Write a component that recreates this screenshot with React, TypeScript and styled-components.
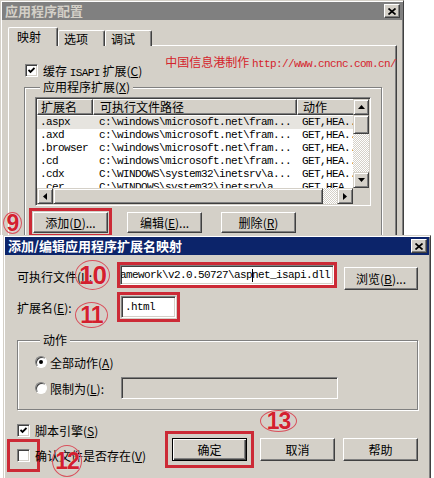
import React from "react";
import styled, { createGlobalStyle, css } from "styled-components";

const FACE = "#d4d0c8";
const SHADOW = "#808080";
const DARK = "#404040";
const MARK = "#cc2a36";

const GlobalStyle = createGlobalStyle`
  html, body { margin: 0; padding: 0; background: #fff; }
  body {
    font-family: "Noto Sans CJK SC", sans-serif;
    font-size: 12px;
    color: #000;
  }
  * { box-sizing: border-box; }
`;

const markCss = css<{ $mark?: number }>`
  ${({ $mark }) =>
    $mark !== undefined &&
    css`
      outline: 3px solid ${MARK};
      outline-offset: ${$mark}px;
    `}
`;

const Screen = styled.div`
  position: relative;
  width: 434px;
  height: 478px;
  overflow: hidden;
  background: #fff;
`;

const Window = styled.div<{ $width: number; $height: number; $left?: number }>`
  width: ${({ $width }) => $width}px;
  height: ${({ $height }) => $height}px;
  margin-left: ${({ $left }) => $left ?? 0}px;
  display: flex;
  flex-direction: column;
  padding: 1px 1px 0 1px;
  overflow: hidden;
  background: ${FACE};
  border: 1px solid;
  border-bottom: none;
  border-color: ${FACE} ${DARK} ${DARK} ${FACE};
  box-shadow: inset 1px 1px 0 #fff, inset -1px 0 0 ${SHADOW};
`;

const TitleBar = styled.div<{ $active?: boolean }>`
  flex: none;
  height: 18px;
  display: flex;
  align-items: center;
  justify-content: space-between;
  padding: 0 2px 0 3px;
  background: ${({ $active }) => ($active ? "#0c246a" : SHADOW)};
  color: ${({ $active }) => ($active ? "#fff" : FACE)};
  font-size: 13px;
  font-weight: bold;
  line-height: 18px;
  white-space: nowrap;
`;

const CloseButton = styled.div`
  width: 16px;
  height: 14px;
  display: flex;
  align-items: center;
  justify-content: center;
  background: ${FACE};
  border: 1px solid;
  border-color: #fff ${DARK} ${DARK} #fff;
  box-shadow: inset -1px -1px 0 ${SHADOW};
`;

const TabBody = styled.div`
  display: flex;
  flex-direction: column;
  padding: 7px 5px 0 6px;
`;

const TabRow = styled.div`
  display: flex;
  align-items: flex-end;
  height: 19px;
  margin-bottom: -1px;
  position: relative;
  z-index: 1;
`;

const Tab = styled.div<{ $active?: boolean; $width: number }>`
  width: ${({ $width }) => $width}px;
  height: ${({ $active }) => ($active ? 19 : 16)}px;
  padding-left: ${({ $active }) => ($active ? 8 : 5)}px;
  line-height: ${({ $active }) => ($active ? 18 : 15)}px;
  font-size: 12px;
  background: ${FACE};
  border: 1px solid;
  border-bottom: none;
  border-color: #fff ${DARK} ${DARK} #fff;
  border-radius: 2px 2px 0 0;
  box-shadow: inset -1px 0 0 ${SHADOW};
`;

const TabPanel = styled.div`
  border: 1px solid;
  border-color: #fff ${DARK} ${DARK} #fff;
  box-shadow: inset -1px -1px 0 ${SHADOW};
  padding: 17px 14px 20px 15px;
`;

const CheckRow = styled.div<{ $indent?: number }>`
  display: flex;
  align-items: center;
  gap: 5px;
  height: 14px;
  margin-left: ${({ $indent }) => $indent ?? 0}px;
  white-space: nowrap;
`;

const Watermark = styled.div`
  margin-left: auto;
  margin-right: -14px;
  align-self: flex-start;
  margin-top: -10px;
  color: #d4232b;
  white-space: nowrap;
`;

const Mono = styled.span`
  font-family: "Liberation Mono", "DejaVu Sans Mono", monospace;
  font-size: 11px;
  letter-spacing: -0.6px;
`;

const Key = styled.span`
  text-decoration: underline;
`;

const CheckBox = styled.span<{ $mark?: number }>`
  flex: none;
  width: 13px;
  height: 13px;
  display: flex;
  align-items: center;
  justify-content: center;
  background: #fff;
  border: 1px solid;
  border-color: ${SHADOW} #fff #fff ${SHADOW};
  box-shadow: inset 1px 1px 0 ${DARK}, inset -1px -1px 0 ${FACE};
  ${markCss}
`;

const Radio = styled.span<{ $checked?: boolean }>`
  flex: none;
  width: 12px;
  height: 12px;
  display: flex;
  align-items: center;
  justify-content: center;
  border-radius: 50%;
  background: #fff;
  border: 1px solid;
  border-color: ${SHADOW} #fff #fff ${SHADOW};
  box-shadow: inset 1px 1px 0 ${DARK};
  &::after {
    content: "";
    width: 4px;
    height: 4px;
    border-radius: 50%;
    background: ${({ $checked }) => ($checked ? "#000" : "transparent")};
  }
`;

const GroupBox = styled.fieldset<{ $pad: string }>`
  margin: 0;
  min-width: 0;
  border: 1px solid ${SHADOW};
  box-shadow: inset 1px 1px 0 #fff, 1px 1px 0 #fff;
  padding: ${({ $pad }) => $pad};
`;

const Legend = styled.legend`
  margin-left: 5px;
  padding: 0 3px;
  line-height: 14px;
  background: ${FACE};
`;

const ListView = styled.div`
  height: 109px;
  display: grid;
  grid-template-columns: minmax(0, 1fr) 16px;
  grid-template-rows: minmax(0, 1fr) 16px;
  padding: 1px;
  background: #fff;
  border: 1px solid;
  border-color: ${SHADOW} #fff #fff ${SHADOW};
  box-shadow: inset 1px 1px 0 ${DARK}, inset -1px -1px 0 ${FACE};
`;

const ListBody = styled.div`
  overflow: hidden;
  background: #fff;
`;

const COLS = "56px 204px 58px";

const ListHeader = styled.div`
  display: grid;
  grid-template-columns: ${COLS};
  height: 16px;
`;

const HeaderCell = styled.div<{ $pad: number }>`
  padding-left: ${({ $pad }) => $pad}px;
  line-height: 14px;
  white-space: nowrap;
  overflow: hidden;
  background: ${FACE};
  border: 1px solid;
  border-color: #fff ${DARK} ${DARK} #fff;
  box-shadow: inset -1px -1px 0 ${SHADOW};
`;

const ListRows = styled.div`
  padding-top: 1px;
`;

const ListRow = styled.div<{ $selected?: boolean }>`
  display: grid;
  grid-template-columns: ${COLS};
  height: 13px;
  background: ${({ $selected }) => ($selected ? "#e6e4df" : "#fff")};
`;

const Cell = styled(Mono)<{ $pad: number }>`
  padding-left: ${({ $pad }) => $pad}px;
  line-height: 13px;
  white-space: nowrap;
  overflow: hidden;
`;

const checker = css`
  background-color: #fff;
  background-image: repeating-conic-gradient(${FACE} 0 25%, #fff 0 50%);
  background-size: 2px 2px;
`;

const ScrollBar = styled.div<{ $vertical?: boolean }>`
  display: flex;
  flex-direction: ${({ $vertical }) => ($vertical ? "column" : "row")};
  ${checker}
`;

const ScrollTrack = styled.div`
  flex: 1;
`;

const RaisedBox = styled.div<{ $w: number; $h: number }>`
  flex: none;
  width: ${({ $w }) => $w}px;
  height: ${({ $h }) => $h}px;
  display: flex;
  align-items: center;
  justify-content: center;
  background: ${FACE};
  border: 1px solid;
  border-color: ${FACE} ${DARK} ${DARK} ${FACE};
  box-shadow: inset 1px 1px 0 #fff, inset -1px -1px 0 ${SHADOW};
`;

const Corner = styled.div`
  background: ${FACE};
`;

const ButtonRow = styled.div<{ $gap: number }>`
  display: flex;
  align-items: flex-end;
  gap: ${({ $gap }) => $gap}px;
`;

const PushButton = styled.button<{ $width: number; $height?: number; $default?: boolean; $mark?: number }>`
  flex: none;
  width: ${({ $width }) => $width}px;
  height: ${({ $height }) => $height ?? 21}px;
  padding: 0;
  font-family: "Noto Sans CJK SC", sans-serif;
  font-size: 12px;
  color: #000;
  background: ${FACE};
  border: 1px solid;
  border-color: #fff ${DARK} ${DARK} #fff;
  box-shadow: inset -1px -1px 0 ${SHADOW}, inset 1px 1px 0 ${FACE};
  white-space: nowrap;
  ${({ $default }) =>
    $default &&
    css`
      border-color: #000;
      box-shadow: inset 1px 1px 0 #fff, inset -1px -1px 0 ${DARK}, inset -2px -2px 0 ${SHADOW};
    `}
  ${markCss}
`;

const DialogBody = styled.div`
  display: flex;
  flex-direction: column;
  padding: 10px 11px 0 12px;
`;

const FieldRow = styled.div<{ $top?: number; $height: number }>`
  display: flex;
  align-items: flex-start;
  height: ${({ $height }) => $height}px;
  margin-top: ${({ $top }) => $top ?? 0}px;
`;

const FieldLabel = styled.div<{ $width: number }>`
  flex: none;
  width: ${({ $width }) => $width}px;
  line-height: 20px;
  padding-top: 2px;
  white-space: nowrap;
`;

const TextBox = styled.div<{ $width: number; $height: number; $disabled?: boolean; $end?: boolean; $mark?: number; $left?: number }>`
  flex: none;
  width: ${({ $width }) => $width}px;
  height: ${({ $height }) => $height}px;
  margin-left: ${({ $left }) => $left ?? 0}px;
  display: flex;
  align-items: center;
  justify-content: ${({ $end }) => ($end ? "flex-end" : "flex-start")};
  padding: 0 3px;
  overflow: hidden;
  white-space: nowrap;
  background: ${({ $disabled }) => ($disabled ? FACE : "#fff")};
  border: 1px solid;
  border-color: ${SHADOW} #fff #fff ${SHADOW};
  box-shadow: inset 1px 1px 0 ${DARK}, inset -1px -1px 0 ${FACE};
  ${markCss}
`;

const Caret = styled.span`
  display: inline-block;
  width: 1px;
  height: 13px;
  margin-right: -1px;
  vertical-align: middle;
  background: #000;
`;

const OptionRow = styled.div<{ $top?: number; $height: number }>`
  display: flex;
  align-items: center;
  gap: 3px;
  height: ${({ $height }) => $height}px;
  margin-top: ${({ $top }) => $top ?? 0}px;
  white-space: nowrap;
`;

const OptionLabel = styled.span<{ $width?: number }>`
  ${({ $width }) => $width && `width: ${$width}px;`}
`;

const BottomArea = styled.div`
  display: flex;
  align-items: flex-end;
  justify-content: space-between;
  margin-top: 13px;
`;

const CheckColumn = styled.div`
  display: flex;
  flex-direction: column;
  gap: 11px;
`;

const Callout = styled.div<{ $x: number; $y: number; $w: number; $h: number; $size: number }>`
  position: absolute;
  left: ${({ $x }) => $x}px;
  top: ${({ $y }) => $y}px;
  width: ${({ $w }) => $w}px;
  height: ${({ $h }) => $h}px;
  display: flex;
  align-items: center;
  justify-content: center;
  border: 1px solid #d9505c;
  border-radius: 50%;
  color: #d3202e;
  font-family: "Liberation Sans", Arial, sans-serif;
  font-size: ${({ $size }) => $size}px;
  font-weight: bold;
  line-height: 1;
  letter-spacing: -1px;
  text-shadow: 0 0 1px #fff;
`;

const XIcon = () => (
  <svg width="8" height="7" viewBox="0 0 8 7">
    <path d="M0.5 0.5 L7.5 6.5 M7.5 0.5 L0.5 6.5" stroke="#000" strokeWidth="1.7" />
  </svg>
);

const Tick = () => (
  <svg width="7" height="7" viewBox="0 0 7 7">
    <polyline points="0.5,3 2.5,5 6.5,1" fill="none" stroke="#000" strokeWidth="1.8" />
  </svg>
);

const Arrow = ({ dir }: { dir: "up" | "down" | "left" | "right" }) => {
  const pts = {
    up: "0,4 3.5,0 7,4",
    down: "0,0 7,0 3.5,4",
    left: "4,0 4,7 0,3.5",
    right: "0,0 0,7 4,3.5",
  }[dir];
  const vertical = dir === "up" || dir === "down";
  return (
    <svg width={vertical ? 7 : 4} height={vertical ? 4 : 7}>
      <polygon points={pts} fill="#000" />
    </svg>
  );
};

const M = ({ k }: { k: string }) => (
  <>
    (<Key>{k}</Key>)
  </>
);

const PATH_NET = "c:\\windows\\microsoft.net\\fram...";
const PATH_SYS = "C:\\WINDOWS\\system32\\inetsrv\\a...";

const rows = [
  { ext: ".aspx", path: PATH_NET },
  { ext: ".axd", path: PATH_NET },
  { ext: ".browser", path: PATH_NET },
  { ext: ".cd", path: PATH_NET },
  { ext: ".cdx", path: PATH_SYS },
  { ext: ".cer", path: PATH_SYS },
];

const App: React.FC = () => {
  return (
    <>
      <GlobalStyle />
      <Screen>
        <Window $width={404} $height={235}>
          <TitleBar>
            <span>应用程序配置</span>
            <CloseButton>
              <XIcon />
            </CloseButton>
          </TitleBar>
          <TabBody>
            <TabRow>
              <Tab $active $width={50}>映射</Tab>
              <Tab $width={47}>选项</Tab>
              <Tab $width={47}>调试</Tab>
            </TabRow>
            <TabPanel>
              <CheckRow $indent={1}>
                <CheckBox>
                  <Tick />
                </CheckBox>
                <span>
                  缓存 <Mono>ISAPI</Mono> 扩展<M k="C" />
                </span>
                <Watermark>
                  中国信息港制作 <Mono>http://www.cncnc.com.cn/</Mono>
                </Watermark>
              </CheckRow>
              <GroupBox $pad="3px 10px 12px 10px" style={{ marginTop: 3 }}>
                <Legend>
                  应用程序扩展<M k="X" />
                </Legend>
                <ListView>
                  <ListBody>
                    <ListHeader>
                      <HeaderCell $pad={3}>扩展名</HeaderCell>
                      <HeaderCell $pad={6}>可执行文件路径</HeaderCell>
                      <HeaderCell $pad={5}>动作</HeaderCell>
                    </ListHeader>
                    <ListRows>
                      {rows.map((r, i) => (
                        <ListRow key={r.ext} $selected={i === 0}>
                          <Cell $pad={3}>{r.ext}</Cell>
                          <Cell $pad={6}>{r.path}</Cell>
                          <Cell $pad={5}>GET,HEA..</Cell>
                        </ListRow>
                      ))}
                    </ListRows>
                  </ListBody>
                  <ScrollBar $vertical>
                    <RaisedBox $w={16} $h={16}>
                      <Arrow dir="up" />
                    </RaisedBox>
                    <RaisedBox $w={16} $h={19} />
                    <ScrollTrack />
                    <RaisedBox $w={16} $h={16}>
                      <Arrow dir="down" />
                    </RaisedBox>
                  </ScrollBar>
                  <ScrollBar>
                    <RaisedBox $w={16} $h={16}>
                      <Arrow dir="left" />
                    </RaisedBox>
                    <RaisedBox $w={270} $h={16} />
                    <ScrollTrack />
                    <RaisedBox $w={16} $h={16}>
                      <Arrow dir="right" />
                    </RaisedBox>
                  </ScrollBar>
                  <Corner />
                </ListView>
                <ButtonRow $gap={19} style={{ marginTop: 6, marginLeft: -2 }}>
                  <PushButton $width={75} $mark={1}>
                    添加<M k="D" />...
                  </PushButton>
                  <PushButton $width={75}>
                    编辑<M k="E" />...
                  </PushButton>
                  <PushButton $width={75}>
                    删除<M k="R" />
                  </PushButton>
                </ButtonRow>
              </GroupBox>
            </TabPanel>
          </TabBody>
        </Window>

        <Window $width={428} $height={260} $left={3}>
          <TitleBar $active>
            <span>添加/编辑应用程序扩展名映射</span>
            <CloseButton>
              <XIcon />
            </CloseButton>
          </TitleBar>
          <DialogBody>
            <FieldRow $height={25}>
              <FieldLabel $width={100}>
                可执行文件<M k="I" />:
              </FieldLabel>
              <TextBox $width={214} $height={20} $left={3} $end $mark={0}>
                <Mono>
                  ramework\v2.0.50727\asp<Caret />net_isapi.dll
                </Mono>
              </TextBox>
              <PushButton $width={74} $height={23} style={{ marginLeft: "auto", marginTop: 2 }}>
                浏览<M k="B" />...
              </PushButton>
            </FieldRow>
            <FieldRow $height={22} $top={6}>
              <FieldLabel $width={100}>
                扩展名<M k="E" />:
              </FieldLabel>
              <TextBox $width={55} $height={22} $left={4} $mark={1}>
                <Mono>.html</Mono>
              </TextBox>
            </FieldRow>
            <GroupBox $pad="8px 17px 10px 17px" style={{ marginTop: 15 }}>
              <Legend>动作</Legend>
              <OptionRow $height={14}>
                <Radio $checked />
                <OptionLabel>
                  全部动作<M k="A" />
                </OptionLabel>
              </OptionRow>
              <OptionRow $height={22} $top={8}>
                <Radio />
                <OptionLabel $width={68}>
                  限制为<M k="L" />:
                </OptionLabel>
                <TextBox $width={217} $height={22} $disabled />
              </OptionRow>
            </GroupBox>
            <BottomArea>
              <CheckColumn>
                <CheckRow>
                  <CheckBox>
                    <Tick />
                  </CheckBox>
                  <span>
                    脚本引擎<M k="S" />
                  </span>
                </CheckRow>
                <CheckRow>
                  <CheckBox $mark={7} />
                  <span>
                    确认文件是否存在<M k="V" />
                  </span>
                </CheckRow>
              </CheckColumn>
              <ButtonRow $gap={8} style={{ marginBottom: 1 }}>
                <PushButton $width={75} $height={23} $default $mark={4} style={{ marginRight: 5 }}>
                  确定
                </PushButton>
                <PushButton $width={75} $height={23}>
                  取消
                </PushButton>
                <PushButton $width={75} $height={23}>
                  帮助
                </PushButton>
              </ButtonRow>
            </BottomArea>
          </DialogBody>
        </Window>

        <Callout $x={3} $y={212} $w={19} $h={22} $size={23}>9</Callout>
        <Callout $x={75} $y={260} $w={35} $h={30} $size={26}>10</Callout>
        <Callout $x={75} $y={302} $w={33} $h={26} $size={23}>11</Callout>
        <Callout $x={52} $y={445} $w={30} $h={32} $size={23}>12</Callout>
        <Callout $x={260} $y={410} $w={37} $h={22} $size={23}>13</Callout>
      </Screen>
    </>
  );
};

export default App;
